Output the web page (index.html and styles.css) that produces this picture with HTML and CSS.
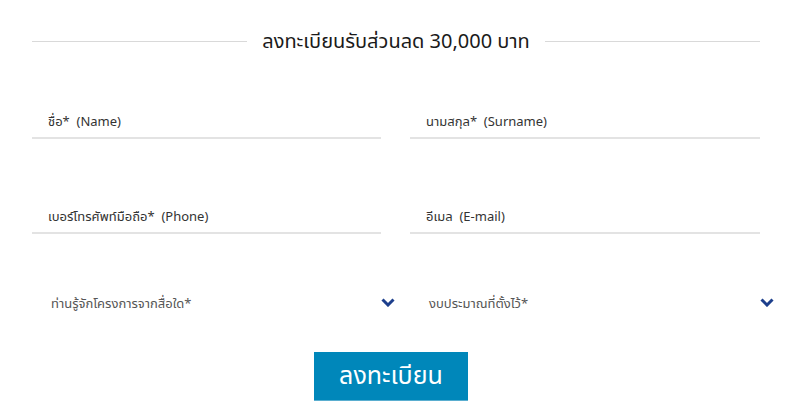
FILE: index.html
```html
<!DOCTYPE html>
<html lang="th">
<head>
    <meta charset="UTF-8">
    <meta name="viewport" content="width=device-width, initial-scale=1.0">
    <title>ลงทะเบียนรับส่วนลด</title>
    <link rel="stylesheet" href="styles.css">
</head>
<body>
    <div class="container">
        <div class="title">
            <span class="title-line"></span>
            <h2>ลงทะเบียนรับส่วนลด 30,000 บาท</h2>
            <span class="title-line"></span>
        </div>
        <form class="register-form">
            <div class="field">ชื่อ*&nbsp; (Name)</div>
            <div class="field">นามสกุล*&nbsp; (Surname)</div>
            <div class="field">เบอร์โทรศัพท์มือถือ*&nbsp; (Phone)</div>
            <div class="field">อีเมล&nbsp; (E-mail)</div>
            <div class="select-field">
                <span>ท่านรู้จักโครงการจากสื่อใด*</span>
                <svg class="chevron" width="14" height="9" viewBox="0 0 14 9">
                    <path d="M1.5 1.5 L7 7 L12.5 1.5" fill="none" stroke="#1d3f8c" stroke-width="3"/>
                </svg>
            </div>
            <div class="select-field">
                <span>งบประมาณที่ตั้งไว้*</span>
                <svg class="chevron" width="14" height="9" viewBox="0 0 14 9">
                    <path d="M1.5 1.5 L7 7 L12.5 1.5" fill="none" stroke="#1d3f8c" stroke-width="3"/>
                </svg>
            </div>
        </form>
        <div class="button-row">
            <button type="submit">ลงทะเบียน</button>
        </div>
    </div>
</body>
</html>
```

FILE: styles.css
```css
body {
    font-family: "Noto Sans", "Noto Sans Thai", Tahoma, sans-serif;
    background-color: #fff;
    color: #333;
    margin: 0;
    padding: 0;
}

.container {
    padding: 29px 40px 0 32px;
}

/* Title with lines on both sides */
.title {
    display: flex;
    align-items: center;
    gap: 15px;
}

.title-line {
    flex: 1;
    height: 1px;
    background-color: #d9d9d9;
}

.title h2 {
    margin: 0;
    font-size: 20px;
    font-weight: normal;
    line-height: 24px;
    color: #1a1a1a;
}

.register-form {
    display: grid;
    grid-template-columns: 349px 350px;
    column-gap: 29px;
    row-gap: 67px;
    margin-top: 58px;
}

.field {
    font-size: 13px;
    line-height: 20px;
    padding: 0 0 6px 16px;
    border-bottom: 2px solid #e3e3e3;
}

.select-field {
    display: flex;
    align-items: center;
    justify-content: space-between;
    margin-top: -8px;
    margin-right: -14px;
    padding-left: 19px;
    font-size: 13px;
    line-height: 20px;
    color: #555;
}

.chevron {
    margin-top: -2px;
}

.button-row {
    display: flex;
    justify-content: center;
    padding-right: 10px;
    margin-top: 39px;
}

button {
    width: 154px;
    height: 49px;
    background-color: #0087ba;
    color: #fff;
    border: none;
    border-bottom: 1px solid #5aaed0;
    font-family: inherit;
    font-size: 25px;
    cursor: pointer;
}
```
